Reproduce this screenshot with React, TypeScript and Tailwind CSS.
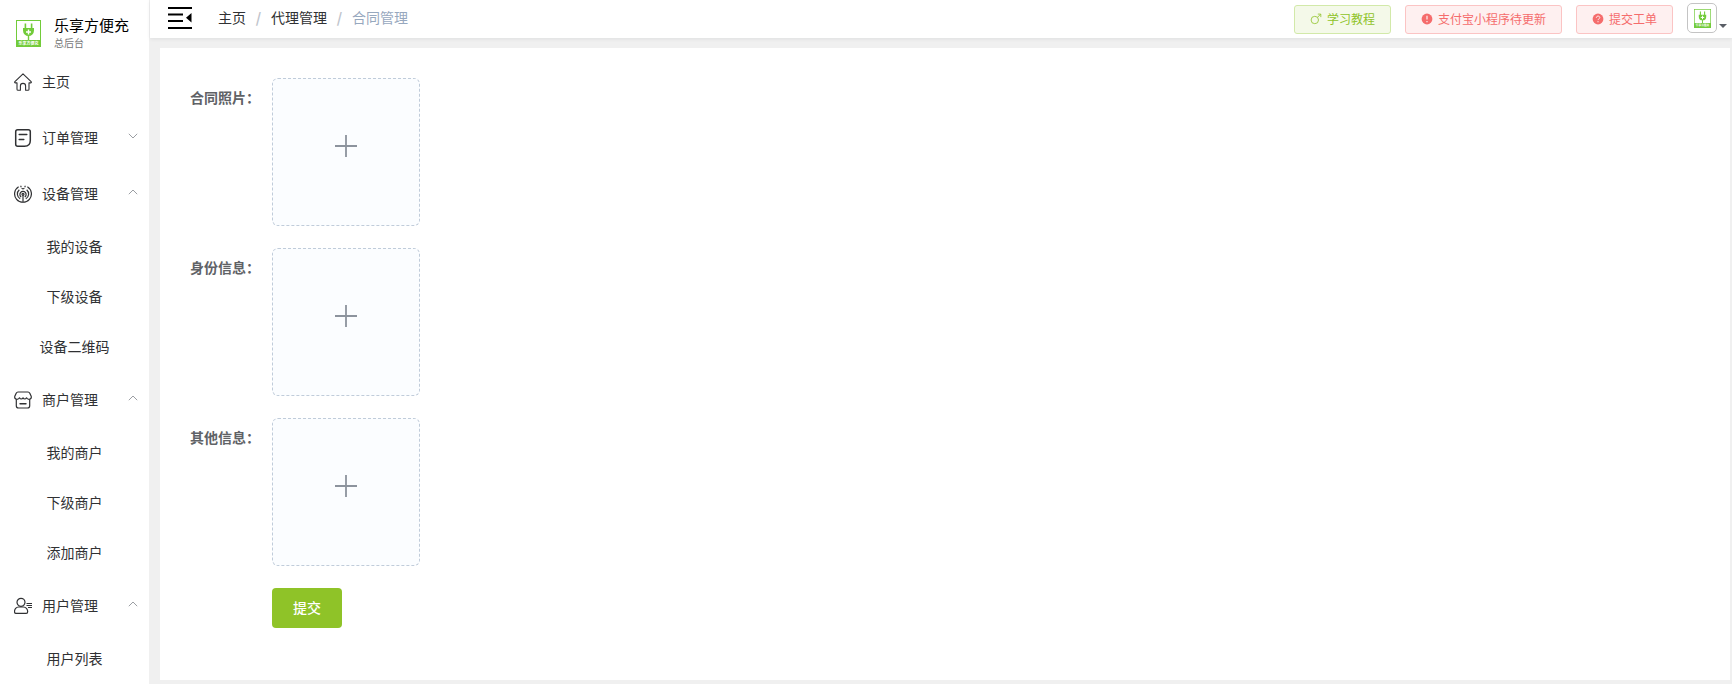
import { useState } from 'react'
import type { ReactNode } from 'react'
import clsx from 'clsx'

interface MenuGroup {
  title: string
  icon: ReactNode
  items: string[]
  open: boolean
}

function Logo({ className }: { className: string }) {
  return (
    <svg viewBox="0 0 25 27" className={className} aria-hidden="true" preserveAspectRatio="none">
      <rect width="25" height="27" fill="#72cb3a" />
      <rect x="1" y="1" width="23" height="19" fill="#fff" />
      <g fill="#72cb3a">
        <rect x="8.6" y="3.5" width="1.6" height="5" />
        <rect x="14.8" y="3.5" width="1.6" height="5" />
        <path d="M7 8h11v2.500a5.500 5.500 0 0 1-11 0z" />
        <rect x="11.800" y="15" width="1.400" height="6" />
      </g>
      <path d="M12.500 9.500v5M10 12h5" stroke="#fff" strokeWidth="1.400" />
      <text x="12.500" y="24.800" fontSize="4" fontWeight="700" fill="#fff" textAnchor="middle">
        乐享方便充
      </text>
    </svg>
  )
}

function HomeIcon() {
  return (
    <svg viewBox="0 0 18 18" className="size-[18px]" fill="none" stroke="#303133" strokeWidth="1.1" strokeLinejoin="round">
      <path d="M9 .8.9 8.600c-.5.600-.2 1.300.5 1.300H3v6.300c0 .7.400 1.100 1.100 1.100h2.300v-4.200c0-1.700 1-2.700 2.600-2.700s2.600 1 2.600 2.700v4.200h2.300c.7 0 1.100-.4 1.100-1.100V9.900h1.600c.7 0 1-.7.500-1.300z" />
    </svg>
  )
}

function OrderIcon() {
  return (
    <svg viewBox="0 0 18 18" className="size-[18px]" fill="none" stroke="#303133" strokeWidth="1.500" strokeLinecap="round">
      <path d="M3.700.8h10.600c1.300 0 2 .7 2 2v8.700c0 3.700-2 5.700-5.700 5.700H3.700c-1.300 0-2-.7-2-2V2.800c0-1.300.7-2 2-2z" />
      <path d="M5.200 5.500h7.600M5.200 10.500h4.600" />
    </svg>
  )
}

function DeviceIcon() {
  return (
    <svg viewBox="0 0 18 18" className="size-[18px]" fill="none" stroke="#303133" strokeWidth="1.200">
      <path d="M4.600 1.700a8.400 8.400 0 1 0 8.800 0" />
      <path d="M6.600.8 7.300 2.300M11.400.8l-.7 1.500M7.600 3.300 9 4l1.400-.7" strokeWidth="1.100" />
      <path d="M5.300 4.800a5.500 5.500 0 0 0 .9 9M12.700 4.800a5.500 5.500 0 0 1-.9 9" />
      <path d="M7.200 12a3.100 3.100 0 1 1 3.600 0" />
      <circle cx="9" cy="9.300" r="1" />
      <path d="M9 10.300v7" />
    </svg>
  )
}

function ShopIcon() {
  return (
    <svg viewBox="0 0 18 18" className="size-[18px]" fill="none" stroke="#303133" strokeWidth="1.200" strokeLinecap="round" strokeLinejoin="round">
      <path d="M4 1h10c.9 0 1.400.4 1.800 1.200l1.400 3.100c.5 1.900-.8 3-2.200 3-1.300 0-2-.6-2.500-1.500C12 7.700 11.500 8 10.700 8S9.400 7.600 9 6.900C8.600 7.600 8.100 8 7.300 8s-1.300-.3-1.800-1.200C5 7.700 4.300 8.300 3 8.300c-1.400 0-2.700-1.100-2.200-3l1.400-3.100C2.600 1.400 3.100 1 4 1z" />
      <path d="M2.300 9v5.700c0 1.500.8 2.300 2.300 2.300h8.800c1.500 0 2.300-.8 2.300-2.300V9" />
      <path d="M6 12.800h6" strokeWidth="1.400" />
    </svg>
  )
}

function UserIcon() {
  return (
    <svg viewBox="0 0 18 18" className="size-[18px]" fill="none" stroke="#303133" strokeWidth="1.200" strokeLinejoin="round">
      <circle cx="7" cy="5.300" r="4" />
      <path d="M4.500 10h5c2.300 0 4.200 2.300 4.200 4.500 0 1.300-.5 1.900-1.500 1.900H1.900c-1 0-1.400-.6-1.400-1.900C.5 12.300 2.200 10 4.500 10z" />
      <path d="M12.500 6.500H18M12.500 8.500H18M14 10.500h4" strokeWidth="1.100" />
    </svg>
  )
}

function Arrow({ open }: { open: boolean }) {
  return (
    <svg viewBox="0 0 10 6" className="mb-1 ml-auto h-[6px] w-[10px]" fill="none" stroke="#909399" strokeWidth=".9">
      <path d={open ? 'M.8 5.200 5 1l4.200 4.200' : 'M.8.8 5 5 9.200.8'} />
    </svg>
  )
}

const groups: MenuGroup[] = [
  { title: '订单管理', icon: <OrderIcon />, items: ['订单列表'], open: false },
  { title: '设备管理', icon: <DeviceIcon />, items: ['我的设备', '下级设备', '设备二维码'], open: true },
  { title: '商户管理', icon: <ShopIcon />, items: ['我的商户', '下级商户', '添加商户'], open: true },
  { title: '用户管理', icon: <UserIcon />, items: ['用户列表'], open: true },
]

const uploads = [
  { id: 'contract', label: '合同照片：' },
  { id: 'identity', label: '身份信息：' },
  { id: 'other', label: '其他信息：' },
]

function SideGroup({ group }: { group: MenuGroup }) {
  const [open, setOpen] = useState(group.open)

  return (
    <li>
      <button
        type="button"
        aria-expanded={open}
        onClick={() => setOpen((o) => !o)}
        className="flex h-14 w-full items-center gap-[10px] pr-[11px] pl-[14px] hover:bg-gray-50"
      >
        {group.icon}
        <span className="pb-[2px]">{group.title}</span>
        <Arrow open={open} />
      </button>
      {open && (
        <ul>
          {group.items.map((item) => (
            <li key={item}>
              <a href="#" className="flex h-[50px] items-center justify-center pb-[2px] hover:bg-gray-50">
                {item}
              </a>
            </li>
          ))}
        </ul>
      )}
    </li>
  )
}

function Sidebar() {
  return (
    <aside className="w-[149px] shrink-0 bg-white">
      <div className="flex h-[54px] items-center gap-[13px] pt-3 pl-4">
        <Logo className="h-[27px] w-[25px]" />
        <div className="text-black">
          <div className="text-[15px] leading-5">乐享方便充</div>
          <div className="text-[10px] leading-4 text-[#777]">总后台</div>
        </div>
      </div>
      <nav>
        <ul>
          <li>
            <a href="#" className="flex h-14 items-center gap-[10px] pl-[14px] hover:bg-gray-50">
              <HomeIcon />
              <span className="pb-[2px]">主页</span>
            </a>
          </li>
          {groups.map((group) => (
            <SideGroup key={group.title} group={group} />
          ))}
        </ul>
      </nav>
    </aside>
  )
}

function TopButton({ icon, text, green }: { icon: ReactNode; text: string; green?: boolean }) {
  return (
    <button
      type="button"
      className={clsx(
        'flex h-[29px] items-center gap-[5px] rounded-[3px] border px-[15px] text-xs',
        green ? 'border-[#d2e9a9] bg-[#f4f9e9] text-[#8fc328]' : 'border-[#fbc4c4] bg-[#fef0f0] text-[#f56c6c]',
      )}
    >
      {icon}
      {text}
    </button>
  )
}

function Header() {
  return (
    <header className="relative ml-px flex h-[38px] items-center bg-white shadow-[0_1px_4px_rgba(0,21,41,0.08)]">
      <button type="button" aria-label="收起菜单" className="mb-[2px] ml-[18px]">
        <svg viewBox="0 0 24 22" className="h-[22px] w-6">
          <path d="M0 0h24v2H0zM0 6.500h15v2H0zM0 13h15v2H0zM0 20h24v2H0zM23.500 6v9.500L18 10.700z" />
        </svg>
      </button>
      <nav aria-label="面包屑" className="mb-1 ml-[26px] flex items-center">
        <a href="#">主页</a>
        <span className="w-[25px] text-center font-bold text-[#c0c4cc]">/</span>
        <a href="#">代理管理</a>
        <span className="w-[25px] text-center font-bold text-[#c0c4cc]">/</span>
        <span className="text-[#97a8be]">合同管理</span>
      </nav>
      <div className="ml-auto flex items-center gap-[14px] pr-[5px]">
        <TopButton
          green
          text="学习教程"
          icon={
            <svg viewBox="0 0 12 12" className="size-3" fill="none" stroke="currentColor" strokeWidth=".8">
              <circle cx="4.800" cy="7" r="3.700" />
              <path d="m7.500 4.300 3-3M7.800 1.100h3v3" />
            </svg>
          }
        />
        <TopButton
          text="支付宝小程序待更新"
          icon={
            <svg viewBox="0 0 12 12" className="size-3">
              <circle cx="6" cy="6" r="5.400" fill="currentColor" />
              <path d="M6 2.800v3.800M6 7.900v1.300" stroke="#fef0f0" strokeWidth="1.200" />
            </svg>
          }
        />
        <TopButton
          text="提交工单"
          icon={
            <svg viewBox="0 0 12 12" className="size-3">
              <circle cx="6" cy="6" r="5.400" fill="currentColor" />
              <path d="M4.300 4.800c0-2.300 3.500-2.200 3.500-.2 0 1.200-1.800 1.200-1.800 2.500M6 8.100v1.200" fill="none" stroke="#fef0f0" strokeWidth="1" />
            </svg>
          }
        />
        <button type="button" aria-label="账户" className="mb-[2px] flex items-end gap-[2px]">
          <span className="flex size-[30px] items-center justify-center rounded-[5px] border border-[#c4c4c4]">
            <Logo className="h-[19px] w-[17px]" />
          </span>
          <svg viewBox="0 0 8 4" className="mb-[5px] h-1 w-2">
            <path d="M0 0h8L4 4z" fill="#5a5e66" />
          </svg>
        </button>
      </div>
    </header>
  )
}

export default function App() {
  return (
    <div className="flex min-h-screen bg-[#f0f0f0] font-['Noto_Sans_CJK_SC',sans-serif] text-sm text-[#303133]">
      <Sidebar />
      <div className="flex min-w-0 flex-1 flex-col">
        <Header />
        <main className="mt-[10px] mr-[2px] mb-1 ml-[11px] flex-1 bg-white p-[30px]">
          <form className="flex flex-col gap-[22px]" onSubmit={(e) => e.preventDefault()}>
            {uploads.map(({ id, label }) => (
              <div key={id} className="flex">
                <label htmlFor={id} className="w-[82px] leading-[38px] font-bold text-[#606266]">
                  {label}
                </label>
                <label className="flex size-[148px] cursor-pointer items-center justify-center rounded-[6px] border border-dashed border-[#c0ccda] bg-[#fbfdff] pb-3 hover:border-[#8fc328]">
                  <input id={id} type="file" accept="image/*" aria-label={label} className="sr-only" />
                  <svg viewBox="0 0 22 22" className="size-[22px]" aria-hidden="true">
                    <path d="M11 0v22M0 11h22" stroke="#8c939d" strokeWidth="1.800" />
                  </svg>
                </label>
              </div>
            ))}
            <button
              type="submit"
              className="ml-[82px] h-10 w-[70px] rounded-[4px] bg-[#8fc328] pb-[2px] font-medium text-white hover:bg-[#a5cf53]"
            >
              提交
            </button>
          </form>
        </main>
      </div>
    </div>
  )
}
